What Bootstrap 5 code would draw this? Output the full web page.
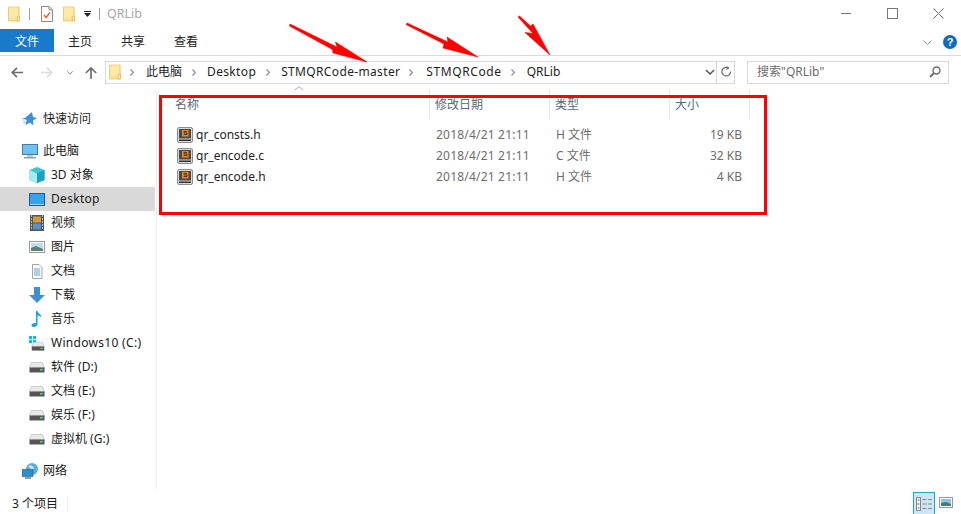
<!DOCTYPE html>
<html lang="zh"><head><meta charset="utf-8"><title>QRLib</title>
<link href="https://cdn.jsdelivr.net/npm/bootstrap@5.3.0/dist/css/bootstrap.min.css" rel="stylesheet">
<style>
html,body{height:514px;overflow:hidden}
body{font:12px/16px "Noto Sans","Noto Sans CJK SC",sans-serif;color:#1a1a1a;background:#fff}
svg{display:block;flex:none}
.win{height:514px;position:relative}
.titlerow{height:29px;padding-left:8px;padding-bottom:2px}
.titlerow .vsep{width:1px;height:12px;background:#a0a0a0}
.qt1{margin-left:9px}.qt2{margin-left:11px}.qt3{margin-left:10px}.qt4{margin-left:9px}.qt5{margin-left:8px}
.wintitle{color:#a6a6a6;margin-left:7px;font-size:12.5px}
.winbtns{margin-left:auto;align-self:flex-start}
.winbtn{width:46px;height:26px;display:flex;align-items:center;justify-content:center}
.tabrow{height:27px;border-bottom:1px solid #dadada}
.filetab{width:54px;height:23px;background:#1979ca;color:#fff;text-align:center;line-height:25px}
.tabitem{width:53px;text-align:center;height:23px;line-height:25px;color:#222}
.tabitem.first{margin-left:-.5px}
.ribbonr{margin-left:auto;padding-right:4px;gap:11px;height:26px}
.addrrow{height:35px;padding-top:5px;align-items:flex-start}
.navbtns{width:105px;height:23px;padding-left:11px}
.addr{width:630px;height:23px;border:1px solid #d9d9d9;padding:0 0 1px 3px;white-space:nowrap}
.crumb{color:#1e1e1e}
.crumbL{letter-spacing:.35px}
.crumbM{letter-spacing:.6px}
.m9{margin-left:9px}.m10{margin-left:10px}.m11{margin-left:11px}.m12{margin-left:12px}.m13{margin-left:13px}
.addrend{margin-left:auto;height:21px}
.addrend .dv{width:1px;height:21px;background:#d9d9d9;margin:0 4px 0 1px}
.refresh{margin-right:2px}
.searchbox{width:202px;height:23px;border:1px solid #d9d9d9;margin-left:12px;padding:0 7px 1px 9px;color:#6d6d6d}
.mainrow{height:398px}
.sidebar{width:157px;border-right:1px solid #efefef;padding-top:16px}
.sitem{height:24px;display:flex;align-items:center;width:155px;white-space:nowrap}
.lv1{padding-left:22px}.lv2{padding-left:29px}
.sitem svg{margin-right:5px}
.lv2 svg{margin-right:6px}
.sitem.sel{background:#d9d9d9}
.latin{letter-spacing:.3px}
.gaptop{margin-top:8px}
.filearea{padding-left:18px;flex:1}
.hdrrow{height:30px;margin-top:-2px;color:#5a6779}
.hc{height:30px;border-right:1px solid #e5e5e5;padding-top:8px}
.c1{width:255px}.c2{width:120px;padding-left:5px}.c3{width:120px;padding-left:5px}.c4{width:80px;padding-left:5px}
.filerows{margin-top:5px}
.frow{height:21px;align-items:center;color:#6d6d6d;white-space:nowrap}
.frow .c1{display:flex;align-items:center;color:#1e1e1e;padding-left:2px}
.frow .c1 svg{margin-right:3px}
.frow .c2{padding-left:6px;letter-spacing:.2px}.frow .c3{padding-left:6px}
.frow .c4{text-align:right;padding-right:8px}
.statusrow{height:25px;padding:4px 0 0 12px}
.stsep{width:1px;height:16px;background:#f0f0f0;margin-left:9px}
.viewbtns{margin-left:auto;padding-right:8px;align-items:flex-end;height:21px}
.viewsel{width:22px;height:22px;background:#cde6f7;border:1px solid #26a0da;border-bottom:0;display:flex;align-items:center;justify-content:center;margin-right:4px;flex:none}
.viewimg{margin-bottom:6px}
.overlay{position:absolute;left:0;top:0;pointer-events:none}
.redbox{position:absolute;left:159px;top:95px;width:608px;height:120px;border:3px solid #f00;pointer-events:none}
</style></head><body>
<svg width="0" height="0" style="position:absolute">
<defs>
<symbol id="folder" viewBox="0 0 13 16"><path d="M.5.5h11.5v15H.5z" fill="#fce396" stroke="#e8c45e"/><path d="M1 1h10v11H1z" fill="#fdeaa9"/><path d="M10 10.500h2.500v5H10z" fill="#fff3c4" stroke="#e4bd55"/></symbol>
<symbol id="hdd" viewBox="0 0 16 12"><path d="M2.500 1.500h11L15.500 7H.5z" fill="#e8e8e8" stroke="#bbb" stroke-width=".6"/><rect x=".5" y="6.500" width="15" height="5" fill="#555"/><rect x="11" y="8" width="2.500" height="1.500" fill="#5fe06a"/></symbol>
<symbol id="src" viewBox="0 0 16 16"><rect x=".5" y=".5" width="15" height="15" rx="1.500" fill="#d8d8d8" stroke="#8c8c8c"/><rect x="2" y="2" width="12" height="9.500" fill="#4a4a4a"/><rect x="5" y="3" width="6.500" height="6.500" fill="#ef8a17"/><path d="M10 4.400H7v1.500h3v1.600H6.700" fill="none" stroke="#5a3000"/><rect x="2" y="12.500" width="12" height="1.500" fill="#333"/></symbol>
<symbol id="chev" viewBox="0 0 4 7"><path d="M.5.500l3 3-3 3" fill="none" stroke="#8c8c8c" stroke-width="1.200"/></symbol>
</defs></svg>
<div class="win d-flex flex-column">
<div class="titlerow d-flex align-items-center">
<svg width="12" height="16"><use href="#folder"/></svg>
<span class="vsep qt1"></span>
<svg class="qt2" width="12" height="16" viewBox="0 0 12 16"><path d="M.5.500h7.500l3.500 3.500v11.500H.5z" fill="#fff" stroke="#8a8a8a"/><path d="M8 .5V4h3.500" fill="none" stroke="#8a8a8a"/><path d="M3 9l2 2.500 4-5" fill="none" stroke="#e8622a" stroke-width="1.500"/></svg>
<svg class="qt3" width="12" height="16"><use href="#folder"/></svg>
<svg class="qt4" width="7" height="6" viewBox="0 0 7 6"><rect y="0" width="7" height="1" fill="#222"/><path d="M0 2h7L3.500 6z" fill="#222"/></svg>
<span class="vsep qt5"></span>
<span class="wintitle">QRLib</span>
<div class="winbtns d-flex">
<div class="winbtn"><svg width="10" height="1"><rect width="10" height="1" fill="#777"/></svg></div>
<div class="winbtn"><svg width="11" height="11"><rect x=".5" y=".5" width="10" height="10" fill="none" stroke="#777"/></svg></div>
<div class="winbtn"><svg width="11" height="11"><path d="M.5.500l10 10M10.500.500l-10 10" stroke="#777" fill="none"/></svg></div>
</div>
</div>
<div class="tabrow d-flex">
<div class="filetab">文件</div>
<div class="tabitem first">主页</div><div class="tabitem">共享</div><div class="tabitem">查看</div>
<div class="ribbonr d-flex align-items-center">
<svg width="9" height="5" viewBox="0 0 9 5"><path d="M.5.500l4 4 4-4" fill="none" stroke="#999"/></svg>
<svg width="14" height="14" viewBox="0 0 14 14"><circle cx="7" cy="7" r="7" fill="#0f6cc4"/><text x="7" y="11" text-anchor="middle" font-size="11" font-weight="700" fill="#fff" font-family="Liberation Sans">?</text></svg>
</div>
</div>
<div class="addrrow d-flex">
<div class="navbtns d-flex align-items-center">
<svg width="12" height="11" viewBox="0 0 12 11"><path d="M6 .8L1.200 5.500 6 10.200M1.500 5.500H12" fill="none" stroke="#6e6e6e" stroke-width="1.700"/></svg>
<svg style="margin-left:18px" width="12" height="11" viewBox="0 0 12 11"><path d="M6 .8l4.800 4.700L6 10.200M10.500 5.500H0" fill="none" stroke="#dcdcdc" stroke-width="1.700"/></svg>
<svg style="margin-left:14px" width="6" height="4" viewBox="0 0 6 4"><path d="M.3.300l2.700 3 2.700-3" fill="none" stroke="#8a8a8a"/></svg>
<svg style="margin-left:12px" width="12" height="12" viewBox="0 0 12 12"><path d="M.8 6L6 1l5.200 5M6 1.500V12" fill="none" stroke="#6e6e6e" stroke-width="1.700"/></svg>
</div>
<div class="addr d-flex align-items-center">
<svg width="12" height="16"><use href="#folder"/></svg>
<svg class="m9" width="4" height="7"><use href="#chev"/></svg>
<span class="crumb m12">此电脑</span>
<svg class="m10" width="4" height="7"><use href="#chev"/></svg>
<span class="crumb crumbL m11">Desktop</span>
<svg class="m10" width="4" height="7"><use href="#chev"/></svg>
<span class="crumb crumbL m11">STMQRCode-master</span>
<svg class="m9" width="4" height="7"><use href="#chev"/></svg>
<span class="crumb crumbM m13">STMQRCode</span>
<svg class="m9" width="4" height="7"><use href="#chev"/></svg>
<span class="crumb m12">QRLib</span>
<div class="addrend d-flex align-items-center">
<svg width="10" height="6" viewBox="0 0 10 6"><path d="M1 1l4 4 4-4" fill="none" stroke="#555" stroke-width="1.500"/></svg>
<span class="dv"></span>
<svg class="refresh" width="11" height="12" viewBox="0 0 11 12"><path d="M9.500 5.500a4.300 4.300 0 1 1-2-3.500" fill="none" stroke="#6e6e6e" stroke-width="1.300"/><path d="M5.500 0v4l3-2z" fill="#6e6e6e"/></svg>
</div>
</div>
<div class="searchbox d-flex align-items-center justify-content-between">
<span>搜索"QRLib"</span>
<svg width="12" height="12" viewBox="0 0 12 12"><circle cx="7.500" cy="4.500" r="3.500" fill="none" stroke="#6e6e6e" stroke-width="1.400"/><path d="M5 7l-4 4" stroke="#6e6e6e" stroke-width="2"/></svg>
</div>
</div>
<div class="mainrow d-flex">
<div class="sidebar">
<div class="sitem lv1"><svg width="16" height="14" viewBox="0 0 16 14"><path d="M10 0l1 5 4 1-4 2.500 .5 5L8 10.500 3.500 13l1.200-5L0 6h3" fill="#3d8fe0"/><path d="M0 8h4M1 10.500h3" stroke="#a9c9ea"/></svg>快速访问</div>
<div class="sitem lv1 gaptop"><svg width="16" height="15" viewBox="0 0 16 15"><rect x=".5" y=".5" width="15" height="10" fill="#6cc2f0" stroke="#4a7a9c"/><rect x="5" y="11" width="6" height="2" fill="#c0ccd6"/><rect x="2" y="13" width="12" height="1.500" fill="#8aa0b0"/></svg>此电脑</div>
<div class="sitem lv2"><svg width="16" height="16" viewBox="0 0 16 16"><path d="M8 0l7.500 3v10L8 16 .5 13V3z" fill="#3cc3d8"/><path d="M8 6.500L.5 3v10L8 16z" fill="#a5ecf2"/><path d="M8 6.500l7.500-3.500v10L8 16z" fill="#1d9fc0"/></svg>3D 对象</div>
<div class="sitem lv2 sel"><svg width="16" height="13" viewBox="0 0 16 13"><rect width="16" height="13" fill="#0e5fa8"/><rect x="1" y="1" width="14" height="10" fill="#35a4ee"/><rect x="1" y="11" width="14" height="1" fill="#9ed3f5"/></svg><span class="latin">Desktop</span></div>
<div class="sitem lv2"><svg width="16" height="16" viewBox="0 0 16 16"><rect x="1" width="14" height="16" fill="#555"/><rect x="4" y="1.500" width="8" height="6" fill="#d19a3a"/><rect x="4" y="8.500" width="8" height="6" fill="#5a8fc8"/><path d="M2 1h1M2 4h1M2 7h1M2 10h1M2 13h1M13 1h1M13 4h1M13 7h1M13 10h1M13 13h1" stroke="#ddd" stroke-width="1.500"/></svg>视频</div>
<div class="sitem lv2"><svg width="16" height="12" viewBox="0 0 16 12"><rect x=".5" y=".5" width="15" height="11" fill="#fff" stroke="#9a9a9a"/><rect x="2" y="2" width="12" height="8" fill="#bcdcef"/><path d="M2 7l5-2 7 3v2H2z" fill="#58836f"/></svg>图片</div>
<div class="sitem lv2"><svg width="16" height="15" viewBox="0 0 16 15"><path d="M3.500.5H10l3 3v11H3.500z" fill="#fff" stroke="#a5a5a5"/><path d="M5 5h6M5 7h6M5 9h6M5 11h6" stroke="#5f9ec8"/></svg>文档</div>
<div class="sitem lv2"><svg width="16" height="16" viewBox="0 0 16 16"><path d="M5 0h6v8h5l-8 8-8-8h5z" fill="#3e8ed8"/></svg>下载</div>
<div class="sitem lv2"><svg width="16" height="16" viewBox="0 0 16 16"><path d="M7 0h1.500c.3 2.500 4 3 4 6.500C11 5 9.500 4.500 8.500 4.500V13c0 2-2 3-4 3s-2-1-2-1.700c0-1.500 2-2.800 4.500-2.300z" fill="#18a0f0"/></svg>音乐</div>
<div class="sitem lv2"><svg width="16" height="15" viewBox="0 0 16 15"><rect width="3" height="3" fill="#19b4ea"/><rect x="4" width="3" height="3" fill="#19b4ea"/><rect y="4" width="3" height="3" fill="#19b4ea"/><rect x="4" y="4" width="3" height="3" fill="#19b4ea"/><use href="#hdd" y="5" width="14" height="10" x="2"/></svg><span class="latin">Windows10 (C:)</span></div>
<div class="sitem lv2"><svg width="16" height="12"><use href="#hdd"/></svg>软件 (D:)</div>
<div class="sitem lv2"><svg width="16" height="12"><use href="#hdd"/></svg>文档 (E:)</div>
<div class="sitem lv2"><svg width="16" height="12"><use href="#hdd"/></svg>娱乐 (F:)</div>
<div class="sitem lv2"><svg width="16" height="12"><use href="#hdd"/></svg>虚拟机 (G:)</div>
<div class="sitem lv1 gaptop"><svg width="16" height="16" viewBox="0 0 16 16"><circle cx="10" cy="6" r="6" fill="#5ca9e8"/><path d="M6 3c3-2 6 0 6 3-2 1-4 0-6-3z" fill="#c6e2f7"/><rect y="6.500" width="11" height="7" fill="#2e8fc8" stroke="#1e5f88" stroke-width=".6"/><rect x="3" y="14" width="6" height="2" fill="#8aa0b0"/></svg>网络</div>
</div>
<div class="filearea">
<div class="hdrrow d-flex">
<div class="hc c1">名称</div><div class="hc c2">修改日期</div><div class="hc c3">类型</div><div class="hc c4">大小</div>
</div>
<div class="filerows">
<div class="frow d-flex"><div class="c1"><svg width="16" height="16"><use href="#src"/></svg>qr_consts.h</div><div class="c2">2018/4/21 21:11</div><div class="c3">H 文件</div><div class="c4">19 KB</div></div>
<div class="frow d-flex"><div class="c1"><svg width="16" height="16"><use href="#src"/></svg>qr_encode.c</div><div class="c2">2018/4/21 21:11</div><div class="c3">C 文件</div><div class="c4">32 KB</div></div>
<div class="frow d-flex"><div class="c1"><svg width="16" height="16"><use href="#src"/></svg>qr_encode.h</div><div class="c2">2018/4/21 21:11</div><div class="c3">H 文件</div><div class="c4">4 KB</div></div>
</div>
</div>
</div>
<div class="statusrow d-flex align-items-center">
<span>3 个项目</span><span class="stsep"></span>
<div class="viewbtns d-flex">
<div class="viewsel"><svg width="16" height="14" viewBox="0 0 16 14"><rect x=".5" y=".5" width="4" height="13" fill="#fff" stroke="#888"/><path d="M1.500 3h2M1.500 7h2M1.500 11h2" stroke="#555"/><path d="M6.500 2.500h4M12 2.500h4M6.500 7h4M12 7h4M6.500 11.500h4M12 11.500h4" stroke="#888"/></svg></div>
<svg class="viewimg" width="14" height="11" viewBox="0 0 14 11"><rect x=".5" y=".5" width="13" height="10" fill="#fff" stroke="#999"/><rect x="2" y="2" width="10" height="7" fill="#88c4ee"/><path d="M2 6l5-1 5 2v2H2z" fill="#4a7a68"/></svg>
</div>
</div>
<svg class="overlay" width="961" height="514" viewBox="0 0 961 514">
<path d="M295 90l4-3.500 4 3.500" fill="none" stroke="#a8a8a8"/>
<path d="M290 24l47 23-1.500-5L367 62l-34-9-.5-3.500-43-23.500z" fill="#f00" stroke="#f00" stroke-width=".6" stroke-linejoin="round"/>
<path d="M407 23l41 19-1-5 31 20-35-9 1-4-38-19.500z" fill="#f00" stroke="#f00" stroke-width=".6" stroke-linejoin="round"/>
<path d="M518 17l15 16.500-8 -1 25 22.500-17-31-2.500 2-11-10z" fill="#f00" stroke="#f00" stroke-width=".6" stroke-linejoin="round"/>
</svg>
<div class="redbox"></div>
</div>
</body></html>
